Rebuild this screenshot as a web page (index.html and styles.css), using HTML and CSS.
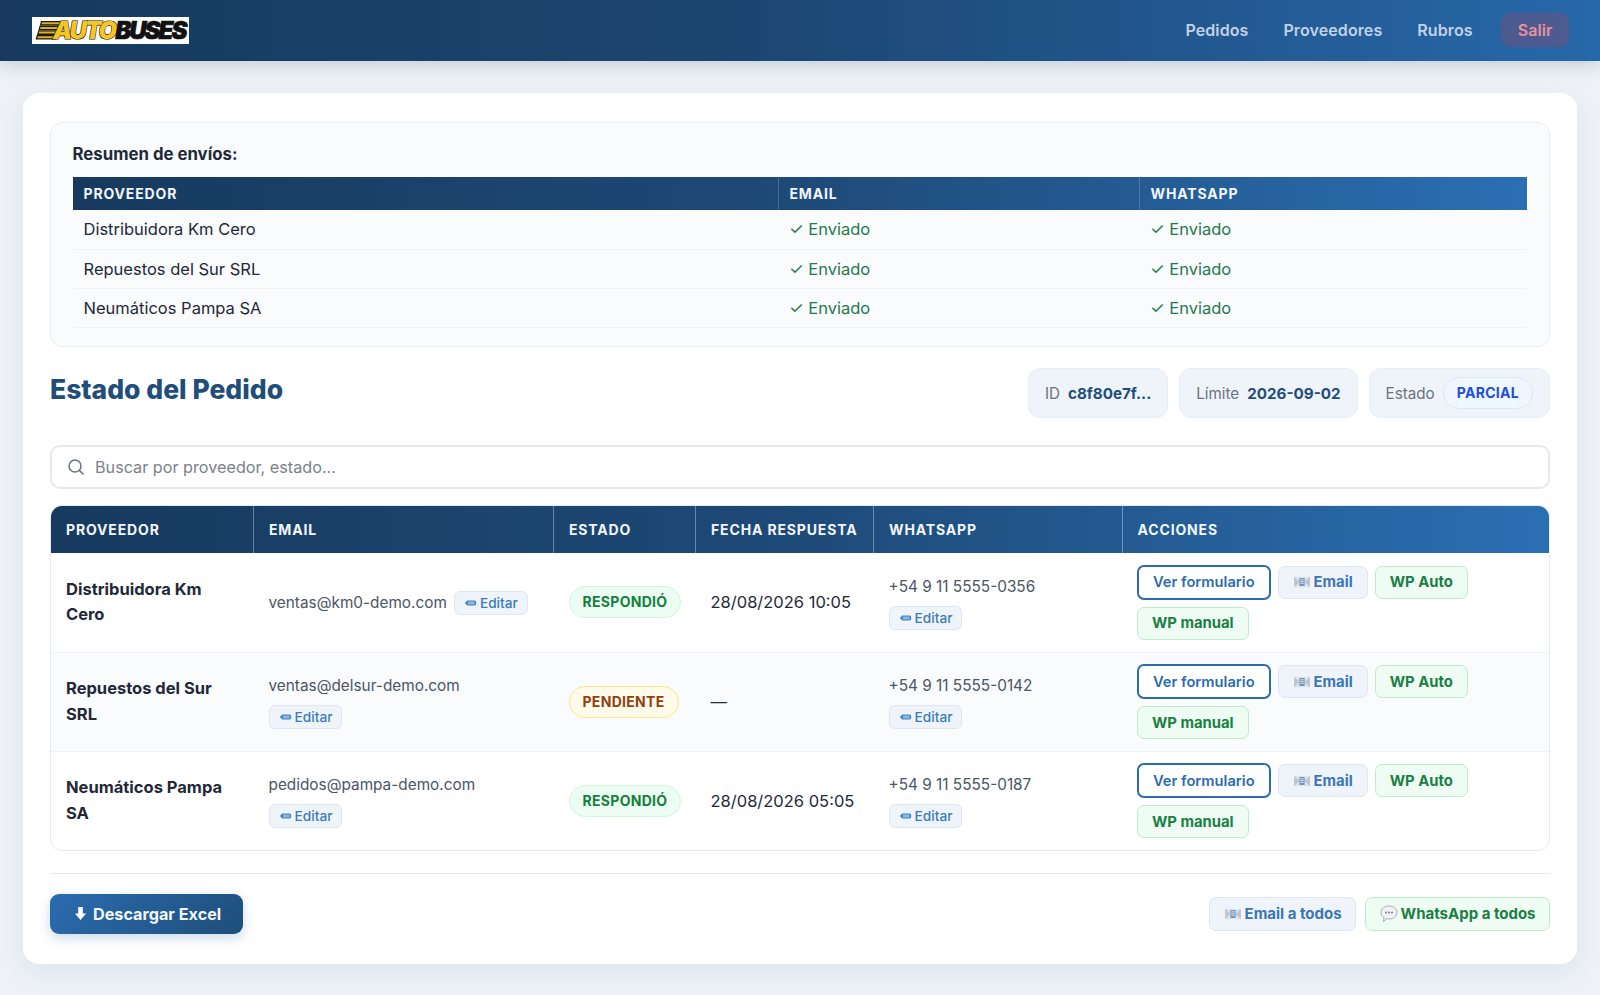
FILE: index.html
```html
<!DOCTYPE html>
<html lang="es">
<head>
  <meta charset="UTF-8">
  <title>Estado del Pedido</title>
  <link rel="stylesheet" href="styles.css">
</head>
<body>

  <svg class="sprites" width="0" height="0">
    <symbol id="ico-mail" viewBox="0 0 20 16">
      <path d="M1 2h18v12H1z" fill="#dfe4ea"/>
      <path d="M1 2l6 6-6 6zM19 2l-6 6 6 6z" fill="#bcc6d1"/>
      <path d="M7 3.500h6v9H7z" fill="#6f93bd"/>
      <path d="M8 5.500h4M8 7.500h4M8 9.500h4" stroke="#e6edf5" stroke-width="1"/>
    </symbol>
    <symbol id="ico-pen" viewBox="0 0 16 12">
      <path d="M1 6l3-3h9a2 2 0 0 1 2 2v2a2 2 0 0 1-2 2H4z" fill="#3f86c6"/>
      <path d="M5 5h8M5 7h8" stroke="#cfe2f3" stroke-width="1"/>
    </symbol>
    <symbol id="ico-chat" viewBox="0 0 18 18">
      <path d="M9 1c4.400 0 8 2.800 8 6.500S13.400 14 9 14c-.8 0-1.500-.1-2.200-.3L3.500 16.500l.6-3.900C2.200 11.400 1 9.600 1 7.500 1 3.800 4.600 1 9 1z" fill="#f1f3f5" stroke="#a3acb5" stroke-width="1"/>
      <circle cx="6" cy="7.500" r=".9" fill="#6b7280"/>
      <circle cx="9" cy="7.500" r=".9" fill="#6b7280"/>
      <circle cx="12" cy="7.500" r=".9" fill="#6b7280"/>
    </symbol>
  </svg>

  <header class="top-bar">
    <div class="logo">
      <svg class="logo-stripes" viewBox="0 0 26 19" width="26" height="19">
        <path d="M6 0h20l-1.200 4.500H4.800zM4.600 4.700h20l-1.200 4.500H3.400zM3.200 9.400h20L22 13.900H2zM1.800 14.100h20l-1.200 4.500H.6z" fill="#1c1a10"/>
        <path d="M7 1.200h18l-.4 2H6.400zM5.600 5.900h18l-.4 2H5zM4.200 10.600h18l-.4 2H3.600zM2.800 15.300h18l-.4 2H2.200z" fill="#e0b020"/>
      </svg>
      <span class="logo-auto">AUTO</span><span class="logo-buses">BUSES</span>
    </div>
    <nav class="main-nav">
      <a href="#">Pedidos</a>
      <a href="#">Proveedores</a>
      <a href="#">Rubros</a>
      <a href="#" class="nav-salir">Salir</a>
    </nav>
  </header>

  <main class="card">

    <section class="resumen">
      <h3>Resumen de envíos:</h3>
      <table class="tabla-resumen">
        <colgroup>
          <col class="rc-prov"><col class="rc-mail"><col>
        </colgroup>
        <thead>
          <tr><th>Proveedor</th><th>Email</th><th>WhatsApp</th></tr>
        </thead>
        <tbody>
          <tr><td>Distribuidora Km Cero</td><td class="ok">✓ Enviado</td><td class="ok">✓ Enviado</td></tr>
          <tr><td>Repuestos del Sur SRL</td><td class="ok">✓ Enviado</td><td class="ok">✓ Enviado</td></tr>
          <tr><td>Neumáticos Pampa SA</td><td class="ok">✓ Enviado</td><td class="ok">✓ Enviado</td></tr>
        </tbody>
      </table>
    </section>

    <div class="pedido-head">
      <h2>Estado del Pedido</h2>
      <div class="meta">
        <div class="meta-item"><span>ID</span><b>c8f80e7f...</b></div>
        <div class="meta-item"><span>Límite</span><b>2026-09-02</b></div>
        <div class="meta-item"><span>Estado</span><em class="badge badge-parcial">PARCIAL</em></div>
      </div>
    </div>

    <div class="buscador">
      <svg viewBox="0 0 18 18" width="18" height="18" fill="none" stroke="#6b7280" stroke-width="1.500" stroke-linecap="round">
        <circle cx="8" cy="8" r="6"/>
        <path d="M12.500 12.500L16 16"/>
      </svg>
      <span>Buscar por proveedor, estado...</span>
    </div>

    <div class="tabla-wrap">
      <table class="tabla-pedido">
        <colgroup>
          <col class="c-prov"><col class="c-mail"><col class="c-est"><col class="c-fecha"><col class="c-wa"><col>
        </colgroup>
        <thead>
          <tr>
            <th>Proveedor</th><th>Email</th><th>Estado</th><th>Fecha respuesta</th><th>WhatsApp</th><th>Acciones</th>
          </tr>
        </thead>
        <tbody>
          <tr>
            <td class="nombre">Distribuidora Km Cero</td>
            <td class="gris"><div class="linea">ventas@km0-demo.com <a href="#" class="editar"><svg width="13" height="10"><use href="#ico-pen"/></svg>Editar</a></div></td>
            <td><span class="badge badge-ok">RESPONDIÓ</span></td>
            <td class="fecha">28/08/2026 10:05</td>
            <td class="gris"><div>+54 9 11 5555-0356</div><a href="#" class="editar abajo"><svg width="13" height="10"><use href="#ico-pen"/></svg>Editar</a></td>
            <td>
              <div class="acciones">
                <a href="#" class="btn btn-form">Ver formulario</a>
                <a href="#" class="btn btn-mail"><svg width="18" height="14"><use href="#ico-mail"/></svg>Email</a>
                <a href="#" class="btn btn-wp">WP Auto</a>
                <a href="#" class="btn btn-wp">WP manual</a>
              </div>
            </td>
          </tr>
          <tr>
            <td class="nombre">Repuestos del Sur SRL</td>
            <td class="gris"><div>ventas@delsur-demo.com</div><a href="#" class="editar abajo"><svg width="13" height="10"><use href="#ico-pen"/></svg>Editar</a></td>
            <td><span class="badge badge-pend">PENDIENTE</span></td>
            <td class="fecha">—</td>
            <td class="gris"><div>+54 9 11 5555-0142</div><a href="#" class="editar abajo"><svg width="13" height="10"><use href="#ico-pen"/></svg>Editar</a></td>
            <td>
              <div class="acciones">
                <a href="#" class="btn btn-form">Ver formulario</a>
                <a href="#" class="btn btn-mail"><svg width="18" height="14"><use href="#ico-mail"/></svg>Email</a>
                <a href="#" class="btn btn-wp">WP Auto</a>
                <a href="#" class="btn btn-wp">WP manual</a>
              </div>
            </td>
          </tr>
          <tr>
            <td class="nombre">Neumáticos Pampa SA</td>
            <td class="gris"><div>pedidos@pampa-demo.com</div><a href="#" class="editar abajo"><svg width="13" height="10"><use href="#ico-pen"/></svg>Editar</a></td>
            <td><span class="badge badge-ok">RESPONDIÓ</span></td>
            <td class="fecha">28/08/2026 05:05</td>
            <td class="gris"><div>+54 9 11 5555-0187</div><a href="#" class="editar abajo"><svg width="13" height="10"><use href="#ico-pen"/></svg>Editar</a></td>
            <td>
              <div class="acciones">
                <a href="#" class="btn btn-form">Ver formulario</a>
                <a href="#" class="btn btn-mail"><svg width="18" height="14"><use href="#ico-mail"/></svg>Email</a>
                <a href="#" class="btn btn-wp">WP Auto</a>
                <a href="#" class="btn btn-wp">WP manual</a>
              </div>
            </td>
          </tr>
        </tbody>
      </table>
    </div>

    <footer class="pie">
      <a href="#" class="btn-excel">
        <svg viewBox="0 0 14 16" width="13" height="15"><path d="M4.500 1h5v7H13l-6 7-6-7h3.500z" fill="#fff"/></svg>
        Descargar Excel
      </a>
      <div class="pie-envios">
        <a href="#" class="btn btn-mail btn-todos"><svg width="18" height="14"><use href="#ico-mail"/></svg>Email a todos</a>
        <a href="#" class="btn btn-wp btn-todos"><svg width="18" height="18"><use href="#ico-chat"/></svg>WhatsApp a todos</a>
      </div>
    </footer>

  </main>

</body>
</html>
```

FILE: styles.css
```css
* {
  box-sizing: border-box;
}
body {
  margin: 0;
  height: 995px;
  overflow: hidden;
  font-family: Inter, "Liberation Sans", sans-serif;
  font-size: 16.5px;
  color: #1f2937;
  background: #eef2f8;
}
a {
  text-decoration: none;
}
.sprites {
  display: block;
  height: 0;
}
.top-bar {
  display: flex;
  align-items: center;
  justify-content: space-between;
  height: 61px;
  padding: 0 31px 1px 32px;
  background: linear-gradient(90deg, #173a5e 0%, #1c4570 45%, #2768aa 100%);
  box-shadow: 0 4px 16px rgba(30, 58, 95, 0.2);
}
.logo {
  display: flex;
  align-items: center;
  width: 157px;
  height: 27px;
  margin-top: 1px;
  padding-left: 3px;
  background: #fff;
  font-size: 24px;
  font-weight: 900;
  font-style: italic;
  letter-spacing: -2px;
  color: #111;
  overflow: hidden;
}
.logo-stripes {
  flex: none;
  margin-right: -8px;
}
.logo-auto {
  color: #f5c623;
  -webkit-text-stroke: 1.2px #15120a;
  paint-order: stroke fill;
}
.logo-buses {
  -webkit-text-stroke: 0.6px #111;
}
.main-nav {
  display: flex;
  align-items: center;
}
.main-nav a {
  padding: 7px 17.5px;
  font-size: 16px;
  line-height: 20px;
  letter-spacing: 0.1px;
  font-weight: 600;
  color: #c2d2e6;
}
.main-nav .nav-salir {
  margin-left: 11px;
  padding: 7px 16.5px;
  border-radius: 9px;
  color: #e8929f;
  background: rgba(220, 53, 69, 0.22);
}
.card {
  margin: 32px 23px 0;
  height: 871px;
  padding: 29px 27px;
  background: #fff;
  border-radius: 16px;
  box-shadow: 0 8px 28px rgba(30, 58, 95, 0.08);
}
.resumen {
  height: 225px;
  padding: 20px 21.5px 0;
  background: #f9fbfd;
  border: 1px solid #e9edf3;
  border-radius: 12px;
}
.resumen h3 {
  margin: 0 0 12px;
  font-size: 16.8px;
  font-weight: 700;
  line-height: 22px;
  color: #1f2937;
}
table {
  width: 100%;
  border-collapse: collapse;
  table-layout: fixed;
}
th {
  text-align: left;
  color: #f2f6fb;
  font-weight: 700;
  letter-spacing: 0.85px;
  text-transform: uppercase;
  white-space: nowrap;
}
thead tr {
  background: linear-gradient(90deg, #173a5e 0%, #1e4a78 50%, #2b6fb3 100%);
}
.tabla-resumen th {
  height: 33px;
  padding: 0 11px;
  font-size: 14px;
  border-right: 1px solid rgba(255, 255, 255, 0.18);
}
.tabla-resumen td {
  height: 39px;
  padding: 0 11px;
  border-bottom: 1px solid #eef1f5;
}
.rc-prov {
  width: 705.5px;
}
.rc-mail {
  width: 361px;
}
.ok {
  color: #1f7a4d;
}
.pedido-head {
  display: flex;
  align-items: flex-start;
  justify-content: space-between;
  margin-top: 21px;
}
.pedido-head h2 {
  margin: 0;
  font-size: 26.500px;
  font-weight: 800;
  line-height: 42px;
  color: #1e4e79;
}
.meta {
  display: flex;
  gap: 11px;
}
.meta-item {
  display: flex;
  align-items: center;
  gap: 8px;
  height: 50px;
  padding: 0 16px;
  font-size: 15.2px;
  color: #6b7280;
  background: #eff4fa;
  border: 1px solid #e6edf6;
  border-radius: 12px;
}
.meta-item b {
  font-weight: 700;
  color: #1e4e79;
}
.meta-item em {
  font-style: normal;
}
.badge {
  display: inline-block;
  padding: 6px 13px;
  font-size: 14px;
  font-weight: 700;
  letter-spacing: 0.3px;
  line-height: 18px;
  border-radius: 999px;
  border: 1px solid;
}
.badge-parcial {
  color: #1d4ed8;
  background: #eff6ff;
  border-color: #dbe6f7;
}
.badge-ok {
  color: #15803d;
  background: #ecfdf3;
  border-color: #d3f5df;
}
.badge-pend {
  color: #92400e;
  background: #fffbeb;
  border-color: #fde68a;
}
.buscador {
  display: flex;
  align-items: center;
  gap: 10px;
  height: 44px;
  margin-top: 27px;
  padding: 0 15px;
  font-size: 16.2px;
  color: #7b8189;
  background: #fff;
  border: 2px solid #e6e9ee;
  border-radius: 10px;
}
.tabla-wrap {
  margin-top: 16px;
  border: 1px solid #e6e9ee;
  border-radius: 12px;
  overflow: hidden;
}
.tabla-pedido th {
  height: 47px;
  padding: 0 15px;
  font-size: 14px;
  border-right: 1px solid rgba(255, 255, 255, 0.35);
}
.tabla-pedido th:last-child {
  border-right: 0;
}
.tabla-pedido td {
  height: 99px;
  padding: 0 15px;
  border-bottom: 1px solid #f0f2f5;
}
.tabla-pedido tr:last-child td {
  border-bottom: 0;
}
.tabla-pedido tbody tr:nth-child(2) {
  background: #fafbfd;
}
.c-prov {
  width: 202.5px;
}
.c-mail {
  width: 300px;
}
.c-est {
  width: 142px;
}
.c-fecha {
  width: 178px;
}
.c-wa {
  width: 248.5px;
}
.nombre {
  font-weight: 700;
  line-height: 25.5px;
}
.fecha {
  white-space: nowrap;
}
.tabla-pedido .gris {
  padding-top: 2px;
  font-size: 15.35px;
  line-height: 20px;
  color: #4b5563;
}
.linea {
  display: flex;
  align-items: center;
  gap: 7px;
  white-space: nowrap;
}
.editar {
  display: inline-flex;
  align-items: center;
  gap: 3px;
  height: 24px;
  padding: 0 9px;
  font-size: 13.7px;
  font-weight: 500;
  color: #3b7cb8;
  background: #eff4fb;
  border: 1px solid #dde6f2;
  border-radius: 6px;
}
.abajo {
  margin-top: 9px;
}
.acciones {
  display: flex;
  flex-wrap: wrap;
  gap: 7px;
  align-items: center;
}
.btn {
  display: inline-flex;
  align-items: center;
  gap: 3px;
  height: 33px;
  padding: 0 14px;
  font-size: 14.8px;
  font-weight: 700;
  border: 1px solid;
  border-radius: 7px;
}
.btn-form {
  height: 35px;
  font-size: 14.7px;
  font-weight: 600;
  color: #2b6cb0;
  background: #fff;
  border: 2px solid #2b6cb0;
}
.btn-mail {
  color: #3b76b5;
  background: #eff4fb;
  border-color: #dde6f2;
}
.btn-wp {
  color: #1a7f45;
  background: #effcf3;
  border-color: #bdeccd;
}
.pie {
  display: flex;
  align-items: center;
  justify-content: space-between;
  margin-top: 21.5px;
  padding-top: 20px;
  border-top: 1px solid #e6e9ee;
}
.btn-excel {
  display: flex;
  align-items: center;
  gap: 6px;
  width: 193px;
  height: 40px;
  padding-left: 24px;
  font-size: 16.2px;
  font-weight: 700;
  color: #f2f6fb;
  background: linear-gradient(135deg, #2b6cb0, #1e4e79);
  border-radius: 9px;
  box-shadow: 0 4px 12px rgba(43, 108, 176, 0.25);
}
.pie-envios {
  display: flex;
  gap: 9px;
}
.btn-todos {
  gap: 3px;
  height: 34px;
  padding: 0 13.5px;
  font-size: 15px;
}
```
